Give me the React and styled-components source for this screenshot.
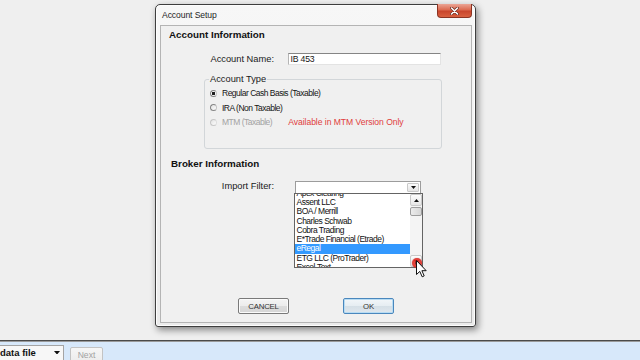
import React from "react";
import styled, { createGlobalStyle, css } from "styled-components";

const GlobalStyle = createGlobalStyle`
  html, body {
    margin: 0;
    padding: 0;
  }
  body {
    width: 640px;
    height: 360px;
    overflow: hidden;
    background: #efefef;
    font-family: "Liberation Sans", Arial, sans-serif;
    color: #151515;
  }
`;

// small narrow dialog font (scaled down MS Sans Serif look)
const narrow = css`
  font-size: 8.5px;
  letter-spacing: -0.5px;
`;

const Screen = styled.div`
  width: 640px;
  height: 360px;
  display: flex;
  flex-direction: column;
`;

const Desktop = styled.div`
  height: 340px;
  padding: 4px 0 0 155px;
  box-sizing: border-box;
  background: #efefef;
`;

const Window = styled.div`
  width: 321px;
  height: 323px;
  box-sizing: border-box;
  display: flex;
  flex-direction: column;
  padding: 0 3px 3px 4px;
  border: 1px solid #3e3e3e;
  border-radius: 5px 5px 3px 3px;
  background: linear-gradient(#f7f7f7, #ebebeb);
  box-shadow: 2px 3px 7px rgba(0, 0, 0, 0.45), inset 0 0 0 1px #fdfdfd;
`;

const TitleBar = styled.div`
  height: 20px;
  display: flex;
  align-items: center;
`;

const Title = styled.span`
  padding-left: 2px;
  font-size: 8.6px;
  letter-spacing: -0.1px;
  color: #1e1e1e;
`;

const CloseButton = styled.div`
  margin-left: auto;
  align-self: flex-start;
  margin-top: -1px;
  width: 35px;
  height: 14px;
  box-sizing: border-box;
  display: flex;
  align-items: center;
  justify-content: center;
  border: 1px solid #8b3322;
  border-top: none;
  border-radius: 0 0 4px 4px;
  background: linear-gradient(#eba595 0%, #dc6a50 45%, #c9452c 55%, #d9603f 100%);
`;

const Client = styled.div`
  flex: 1;
  display: flex;
  flex-direction: column;
  border: 1px solid #b4b4b4;
  background: #f0f0f0;
`;

const SectionTitle = styled.div`
  margin-top: ${p => p.$mt}px;
  padding-left: ${p => p.$indent}px;
  font-size: 9.8px;
  font-weight: bold;
  line-height: 12px;
  color: #111;
`;

const FieldRow = styled.div`
  margin-top: ${p => p.$mt}px;
  display: flex;
  align-items: center;
`;

const FieldLabel = styled.span`
  width: 113px;
  text-align: right;
  font-size: 9.3px;
  line-height: 10px;
  padding-bottom: ${p => (p.$raise ? 3 : 0)}px;
  color: #1a1a1a;
`;

const TextInput = styled.div`
  margin-left: 14px;
  width: 153px;
  height: 12px;
  box-sizing: border-box;
  padding-left: 1.5px;
  display: flex;
  align-items: center;
  font-size: 8.7px;
  letter-spacing: -0.2px;
  background: #fff;
  border: 1px solid #e3e3e3;
  border-top-color: #858585;
  border-left-color: #b5b5b5;
`;

const GroupBox = styled.div`
  position: relative;
  margin: 14px 0 0 43px;
  width: 238px;
  height: 70px;
  box-sizing: border-box;
  padding: 6px 0 0 5px;
  border: 1px solid #d2d6d9;
  border-radius: 3px;
`;

const GroupLegend = styled.span`
  position: absolute;
  top: -6px;
  left: 4px;
  padding: 0 1px;
  background: #f0f0f0;
  font-size: 9.3px;
  line-height: 11px;
  color: #1a1a1a;
`;

const RadioRow = styled.div`
  height: 14.5px;
  display: flex;
  align-items: center;
`;

const RadioMark = styled.span`
  width: 7px;
  height: 7px;
  box-sizing: border-box;
  border-radius: 50%;
  border: 1px solid ${p => (p.$disabled ? "#c6c6c6" : "#858585")};
  border-right-color: ${p => (p.$disabled ? "#dedede" : "#c4c4c4")};
  background: ${p =>
    p.$checked
      ? "radial-gradient(circle, #1c1c1c 0 1.4px, #f6f6f6 2px)"
      : "linear-gradient(135deg, #e2e2e2, #fdfdfd)"};
`;

const RadioText = styled.span`
  margin-left: 5px;
  ${narrow};
  color: ${p => (p.$disabled ? "#a3a3a3" : "#151515")};
`;

const Note = styled.span`
  margin-left: 16px;
  font-size: 8.6px;
  letter-spacing: -0.05px;
  color: #e03c3c;
`;

const Combo = styled.div`
  position: relative;
  margin-left: 21px;
  width: 126px;
  height: 13px;
  box-sizing: border-box;
  display: flex;
  align-items: center;
  justify-content: flex-end;
  padding-right: 1px;
  background: #fff;
  border: 1px solid #9c9c9c;
`;

const ComboArrow = styled.div`
  width: 12px;
  height: 9px;
  box-sizing: border-box;
  display: flex;
  align-items: center;
  justify-content: center;
  border: 1px solid #c9c9c9;
  border-radius: 1px;
  background: linear-gradient(#fbfbfb, #e4e4e4);
`;

const DropList = styled.div`
  position: absolute;
  top: 11px;
  left: -2px;
  width: 129px;
  height: 75px;
  box-sizing: border-box;
  display: flex;
  background: #fff;
  border: 1px solid #646464;
  z-index: 2;
`;

const ListItems = styled.div`
  flex: 1;
  overflow: hidden;
`;

const ListInner = styled.div`
  margin-top: -5.3px;
`;

const ListItem = styled.div`
  height: 9.3px;
  line-height: 9.3px;
  padding-left: 1.5px;
  white-space: nowrap;
  ${narrow};
  color: ${p => (p.$selected ? "#fff" : "#111")};
  background: ${p => (p.$selected ? "#3399ff" : "transparent")};
`;

const ScrollBar = styled.div`
  width: 12px;
  display: flex;
  flex-direction: column;
  background: #f4f4f4;
`;

const ScrollButton = styled.div`
  height: 12px;
  box-sizing: border-box;
  display: flex;
  align-items: center;
  justify-content: center;
  border: 1px solid #cacaca;
  border-radius: 2px;
  background: linear-gradient(#fdfdfd, #e6e6e6);
`;

const Thumb = styled.div`
  height: 9px;
  margin-top: 1px;
  box-sizing: border-box;
  border: 1px solid #9d9d9d;
  border-radius: 2px;
  background: linear-gradient(90deg, #ececec, #d6d6d6);
`;

const Track = styled.div`
  flex: 1;
`;

const ClickMark = styled.div`
  position: absolute;
  left: 117px;
  top: 63.5px;
  width: 10px;
  height: 10px;
  border-radius: 50%;
  background: radial-gradient(circle, rgba(120, 20, 20, 0.9) 0 1.5px, rgba(232, 40, 30, 0.85) 2.5px, rgba(205, 25, 20, 0.9) 100%);
  box-shadow: 0 0 1px rgba(150, 0, 0, 0.6);
`;

const Cursor = styled.svg`
  position: absolute;
  left: 121px;
  top: 66px;
`;

const ButtonRow = styled.div`
  margin-top: auto;
  padding-bottom: 8px;
  display: flex;
  justify-content: center;
  gap: 54px;
`;

const DialogButton = styled.div`
  width: 51px;
  height: 16px;
  box-sizing: border-box;
  display: flex;
  align-items: center;
  justify-content: center;
  font-size: 7.8px;
  letter-spacing: -0.2px;
  color: #333;
  border: 1px solid ${p => (p.$default ? "#4a87bd" : "#7a7a7a")};
  border-radius: 2px;
  background: ${p =>
    p.$default
      ? "linear-gradient(#f2f6f9 0%, #e6edf2 50%, #d5dfe6 51%, #dfe7ee 100%)"
      : "linear-gradient(#f4f4f4 0%, #ececec 50%, #dcdcdc 51%, #d6d6d6 100%)"};
  box-shadow: inset 0 0 0 1px ${p => (p.$default ? "#b8dcf3" : "#fbfbfb")};
`;

const Divider = styled.div`
  height: 2px;
  box-sizing: border-box;
  border-top: 1px solid #4a4a4a;
  border-bottom: 1px solid #9a9a9a;
`;

const Taskbar = styled.div`
  flex: 1;
  display: flex;
  align-items: flex-start;
  overflow: hidden;
  background: #d7e8fa;
`;

const FileSelect = styled.div`
  margin-top: 3px;
  width: 64px;
  height: 18px;
  box-sizing: border-box;
  display: flex;
  align-items: center;
  justify-content: space-between;
  padding: 0 3px 3px 0;
  background: #f7f7f7;
  border: 1px solid #a4a4a4;
  border-left: none;
  font-size: 9.5px;
  font-weight: bold;
  color: #111;
`;

const NextButton = styled.div`
  margin: 4.5px 0 0 6px;
  width: 33px;
  height: 17px;
  box-sizing: border-box;
  display: flex;
  justify-content: center;
  padding-top: 2px;
  border: 1px solid #c3c3c3;
  border-radius: 2px;
  background: linear-gradient(#f6f6f6, #ebebeb);
  font-size: 8.6px;
  color: #a2a2a2;
`;

const Triangle = ({ down, size = 5 }) => (
  <svg width={size} height={size * 0.6} viewBox="0 0 10 6">
    {down ? <path d="M0 0 H10 L5 6 Z" fill="#111" /> : <path d="M0 6 H10 L5 0 Z" fill="#111" />}
  </svg>
);

const CloseGlyph = () => (
  <svg width="9" height="8" viewBox="0 0 9 8">
    <path d="M1.5 1 L7.5 7 M7.5 1 L1.5 7" stroke="#6b2a1e" strokeWidth="3" strokeLinecap="round" />
    <path d="M1.5 1 L7.5 7 M7.5 1 L1.5 7" stroke="#fff" strokeWidth="1.6" strokeLinecap="round" />
  </svg>
);

const brokers = [
  "Apex Clearing",
  "Assent LLC",
  "BOA / Merrill",
  "Charles Schwab",
  "Cobra Trading",
  "E*Trade Financial (Etrade)",
  "eRegal",
  "ETG LLC (ProTrader)",
  "Excel-Text",
];

const accountTypes = [
  { label: "Regular Cash Basis (Taxable)", checked: true },
  { label: "IRA (Non Taxable)" },
  { label: "MTM (Taxable)", disabled: true, note: "Available in MTM Version Only" },
];

const App = () => {
  return (
    <Screen>
      <GlobalStyle />
      <Desktop>
        <Window>
          <TitleBar>
            <Title>Account Setup</Title>
            <CloseButton>
              <CloseGlyph />
            </CloseButton>
          </TitleBar>
          <Client>
            <SectionTitle $mt={3} $indent={8}>
              Account Information
            </SectionTitle>
            <FieldRow $mt={12}>
              <FieldLabel>Account Name:</FieldLabel>
              <TextInput>IB 453</TextInput>
            </FieldRow>
            <GroupBox>
              <GroupLegend>Account Type</GroupLegend>
              {accountTypes.map((t, k) => (
                <RadioRow key={k}>
                  <RadioMark $checked={t.checked} $disabled={t.disabled} />
                  <RadioText $disabled={t.disabled}>{t.label}</RadioText>
                  {t.note && <Note>{t.note}</Note>}
                </RadioRow>
              ))}
            </GroupBox>
            <SectionTitle $mt={9} $indent={10}>
              Broker Information
            </SectionTitle>
            <FieldRow $mt={11}>
              <FieldLabel $raise>Import Filter:</FieldLabel>
              <Combo>
                <ComboArrow>
                  <Triangle down />
                </ComboArrow>
                <DropList>
                  <ListItems>
                    <ListInner>
                      {brokers.map((b, k) => (
                        <ListItem key={k} $selected={b === "eRegal"}>
                          {b}
                        </ListItem>
                      ))}
                    </ListInner>
                  </ListItems>
                  <ScrollBar>
                    <ScrollButton>
                      <Triangle />
                    </ScrollButton>
                    <Thumb />
                    <Track />
                    <ScrollButton>
                      <Triangle down />
                    </ScrollButton>
                  </ScrollBar>
                  <ClickMark />
                  <Cursor width="11" height="18" viewBox="0 0 11 18">
                    <path
                      d="M0.5 0.5 L0.5 14.5 L3.8 11.4 L6.2 16.8 L8.2 15.9 L5.9 10.7 L10.2 10.7 Z"
                      fill="#fff"
                      stroke="#111"
                      strokeWidth="1"
                      strokeLinejoin="round"
                    />
                  </Cursor>
                </DropList>
              </Combo>
            </FieldRow>
            <ButtonRow>
              <DialogButton>CANCEL</DialogButton>
              <DialogButton $default>OK</DialogButton>
            </ButtonRow>
          </Client>
        </Window>
      </Desktop>
      <Divider />
      <Taskbar>
        <FileSelect>
          <span>data file</span>
          <Triangle down size={6} />
        </FileSelect>
        <NextButton>Next</NextButton>
      </Taskbar>
    </Screen>
  );
};

export default App;
